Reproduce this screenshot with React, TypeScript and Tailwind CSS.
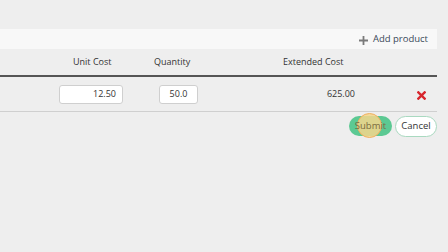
export default function App() {
  return (
    <div className="h-[252px] w-[448px] overflow-hidden bg-[#eeeeee] pt-[29px] font-['Open_Sans',sans-serif] text-[9px] text-[#333]">
      <div className="w-[437px]">
        {/* toolbar */}
        <div className="flex h-[20px] items-center justify-end bg-[#f8f8f8] pr-[9px] text-[#3a4a5a]">
          <svg width="9" height="9" viewBox="0 0 10 10" className="mr-[5px] mt-[2px]">
            <path d="M4 0h2v4h4v2H6v4H4V6H0V4h4z" fill="#7a7a7a" />
          </svg>
          <span className="text-[9.5px]">Add product</span>
        </div>

        {/* header */}
        <div className="flex h-[28px] items-center border-b-2 border-[#555]">
          <div className="w-[59px]" />
          <div className="w-[90px] pl-[14px]">Unit Cost</div>
          <div className="w-[101px] pl-[5px]">Quantity</div>
          <div className="w-[110px] pl-[33px]">Extended Cost</div>
          <div className="flex-1" />
        </div>

        {/* row */}
        <div className="flex h-[35px] items-center border-b border-[#cfcfcf]">
          <div className="w-[59px]" />
          <div className="w-[90px]">
            <div className="flex h-[19px] w-[64px] items-center justify-end rounded-[3px] border border-[#cfcfcf] bg-white pr-[6px]">
              12.50
            </div>
          </div>
          <div className="w-[101px] pl-[10px]">
            <div className="flex h-[19px] w-[39px] items-center justify-center rounded-[3px] border border-[#cfcfcf] bg-white">
              50.0
            </div>
          </div>
          <div className="w-[110px] pr-[5px] text-right">625.00</div>
          <div className="flex flex-1 justify-end pr-[11px] pt-[2px]">
            <svg width="9" height="9" viewBox="0 0 10 10">
              <path d="M1.5 1.5l7 7M8.5 1.5l-7 7" stroke="#d7262d" strokeWidth="2.6" strokeLinecap="square" />
            </svg>
          </div>
        </div>

        {/* actions */}
        <div className="mt-[4px] flex justify-end gap-[3px]">
          <div className="relative flex h-[20px] w-[43px] items-center justify-center rounded-full bg-[#5cc993] text-[9.5px] text-[#7a6a40]">
            <div className="absolute left-[8px] top-[-3px] h-[25px] w-[25px] rounded-full border border-[#f0b060] bg-[#f3d68c]/85" />
            <span className="relative">Submit</span>
          </div>
          <div className="flex h-[21px] w-[42px] items-center justify-center rounded-full border border-[#a9d9c0] bg-white text-[9.5px] text-[#333]">
            Cancel
          </div>
        </div>
      </div>
    </div>
  );
}
